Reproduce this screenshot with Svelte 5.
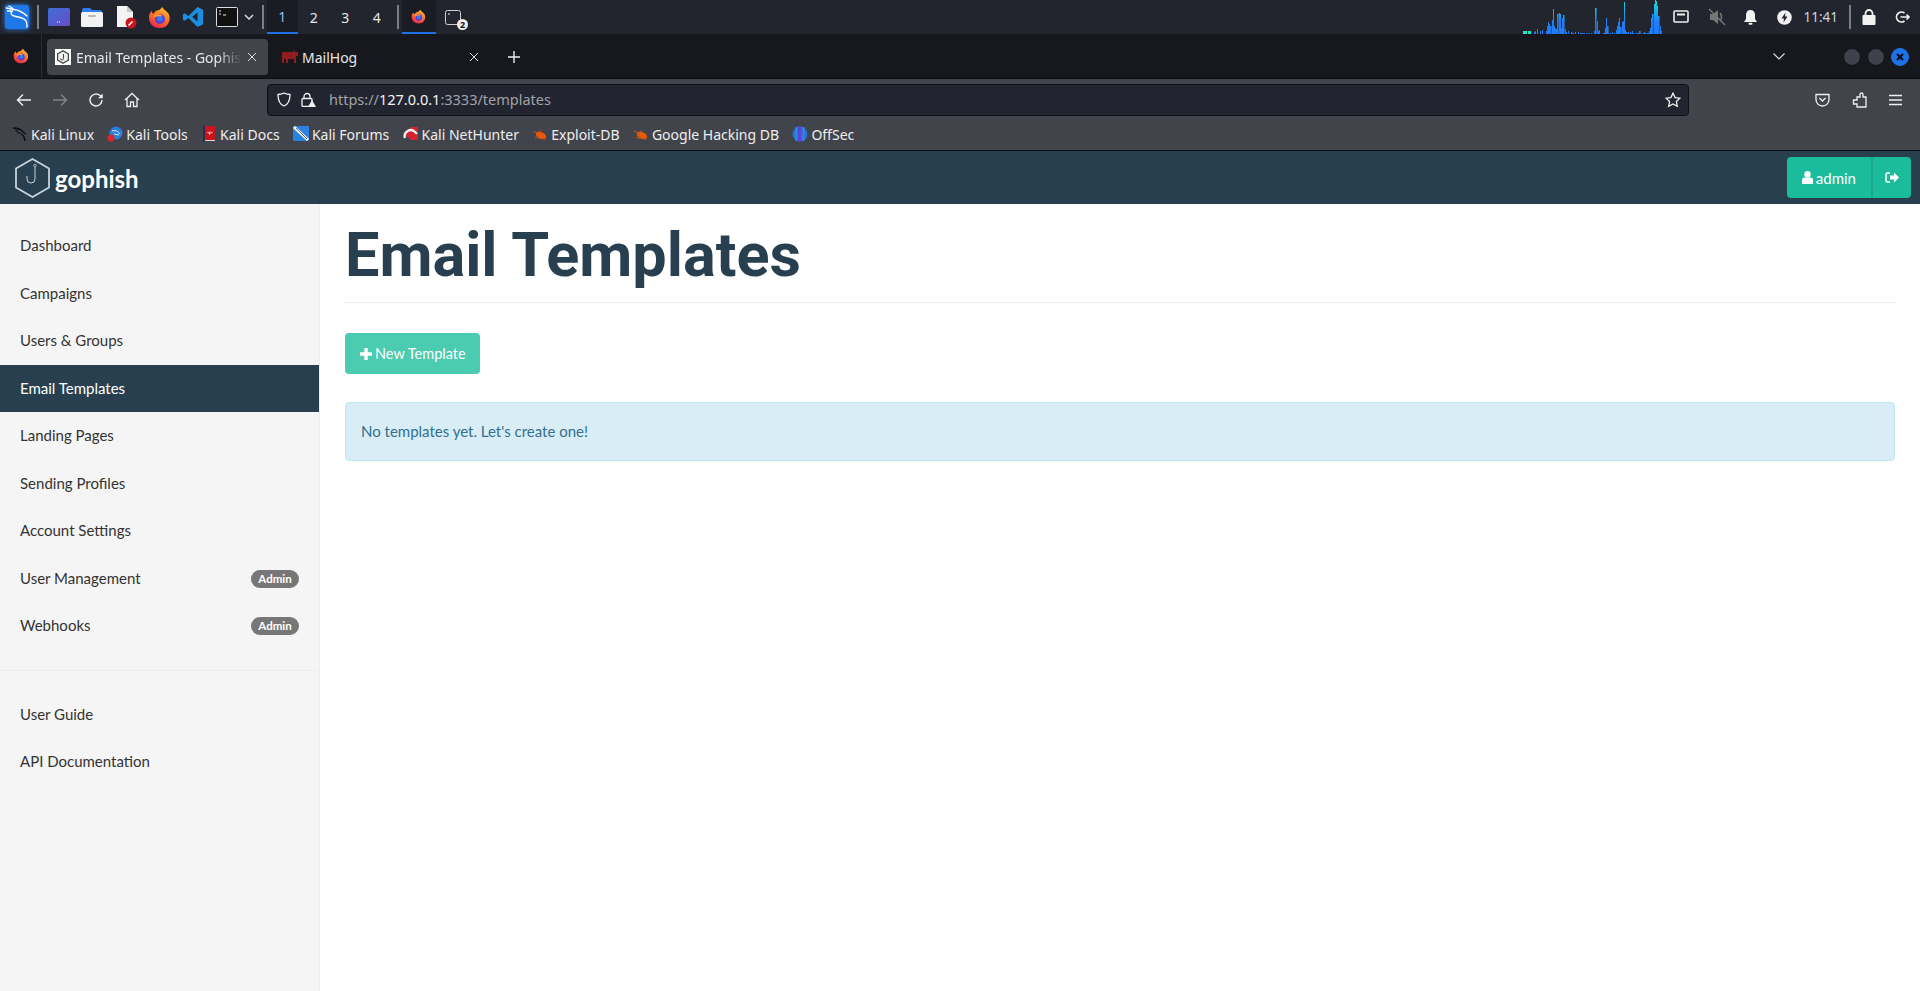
<script>
    const workspaces = ["1", "2", "3", "4"];

    // heights of the cpu graph in the panel, one per bar
    const cpu = [3,3,3,0,3,3,3,0,0,2,3,0,5,0,3,0,4,0,0,3,8,12,10,8,14,25,8,6,5,20,21,20,6,16,19,5,2,0,3,0,2,1,1,0,2,0,2,0,1,1,1,1,0,1,0,1,0,1,0,0,3,26,13,3,4,0,0,1,1,6,16,8,1,1,0,2,0,1,4,8,12,16,7,12,13,32,4,2,2,0,2,1,3,1,0,1,1,1,3,1,0,1,2,1,1,1,3,6,16,20,30,34,33,28,18,8,3];

    const bookmarks = [
        { label: "Kali Linux", icon: "dragon" },
        { label: "Kali Tools", icon: "tools" },
        { label: "Kali Docs", icon: "docs" },
        { label: "Kali Forums", icon: "forums" },
        { label: "Kali NetHunter", icon: "hunter" },
        { label: "Exploit-DB", icon: "bug" },
        { label: "Google Hacking DB", icon: "bug" },
        { label: "OffSec", icon: "offsec" },
    ];

    const navMain = [
        { label: "Dashboard" },
        { label: "Campaigns" },
        { label: "Users & Groups" },
        { label: "Email Templates", active: true },
        { label: "Landing Pages" },
        { label: "Sending Profiles" },
        { label: "Account Settings" },
        { label: "User Management", badge: "Admin" },
        { label: "Webhooks", badge: "Admin" },
    ];
    const navHelp = ["User Guide", "API Documentation"];
</script>

{#snippet firefox(size)}
    <svg width={size} height={size} viewBox="0 0 24 24">
        <defs>
            <linearGradient id="ff" x1="0.7" y1="0" x2="0.2" y2="1">
                <stop offset="0" stop-color="#ffbd2e" />
                <stop offset="0.5" stop-color="#ff6a2b" />
                <stop offset="1" stop-color="#e5204f" />
            </linearGradient>
        </defs>
        <path d="M15 1c1 3 5 4 7 8 2 6-1 14-10 14C5 23 1 18 1 12c0-3 1-5 3-7 0 2 1 3 2 3 1-3 4-3 6-4 1-1 2-2 3-3z" fill="url(#ff)" />
        <circle cx="12.5" cy="13.5" r="5.2" fill="#5b3bd6" />
        <circle cx="12.5" cy="13" r="3" fill="#2f7ff0" />
        <path d="M6 10c3-2 7-2 9 0l-2 1c-2-1-4 0-7 1z" fill="#ff9a2b" />
    </svg>
{/snippet}

{#snippet bug()}
    <svg width="16" height="16" viewBox="0 0 16 16">
        <ellipse cx="9" cy="9.5" rx="5.5" ry="3.2" fill="#e8590c" transform="rotate(25 9 9.5)" />
        <path d="M1 5l6 3M3 12l4-2M8 4l1 3M13 14l-2-3M6 13l1-2" stroke="#c9500f" stroke-width="1" />
    </svg>
{/snippet}

{#snippet closeX()}
    <svg class="tab-close" width="10" height="10" viewBox="0 0 10 10" stroke="#dcdcdc" stroke-width="1"><path d="M1 1l8 8M9 1l-8 8" /></svg>
{/snippet}

<div class="panel">
    <div class="launcher">
        <div class="kali-btn">
            <svg width="24" height="24" viewBox="0 0 24 24" fill="none" stroke="#fff" stroke-width="1.400" stroke-linecap="round" stroke-linejoin="round">
                <path d="M1.500 3L9 4.500C14 5 18 7.500 22 11" />
                <path d="M2.500 6L7.500 6C5 8 6 10 9 11C13 12.500 19 12 21 16C22 18 22 20 22 22" />
                <path d="M4 1L8 3.500" />
            </svg>
        </div>
        <span class="sep first"></span>
        <div class="launch-icon">
            <svg width="22" height="18" viewBox="0 0 22 18"><defs><linearGradient id="desk" x1="0" y1="0" x2="1" y2="1"><stop offset="0" stop-color="#3c6fd8" /><stop offset="1" stop-color="#6a4bc4" /></linearGradient></defs><rect width="22" height="18" rx="1.5" fill="url(#desk)" /><path d="M9 14h4" stroke="#fff" stroke-dasharray="1 1" /></svg>
        </div>
        <div class="launch-icon">
            <svg width="22" height="20" viewBox="0 0 22 20"><path d="M1 3q0-2 2-2h6l2 2h8q2 0 2 2v2H1z" fill="#2b7de9" /><rect x="0" y="5" width="22" height="15" rx="1.5" fill="#f2f2f2" /><rect x="7" y="8" width="8" height="2" rx="1" fill="#b9b9b9" /></svg>
        </div>
        <div class="launch-icon">
            <svg width="22" height="24" viewBox="0 0 22 24"><path d="M2 1h10l6 6v15H2z" fill="#f4f4f4" /><path d="M12 1l6 6h-6z" fill="#c9c9c9" /><circle cx="16" cy="18" r="5.5" fill="#c4161c" /><path d="M13.5 20.5l4-4" stroke="#fff" stroke-width="1.6" /></svg>
        </div>
        <div class="launch-icon">{@render firefox(23)}</div>
        <div class="launch-icon">
            <svg width="22" height="22" viewBox="0 0 24 24"><path d="M17 1l6 3v16l-6 3-10-10 -4 3-2-1V9l2-1 4 3zM17 7l-6 5 6 5z" fill="#1b8fe0" fill-rule="evenodd" /></svg>
        </div>
        <div class="launch-icon">
            <svg width="22" height="20" viewBox="0 0 22 20"><rect x="0.5" y="0.5" width="21" height="19" rx="1" fill="#111" stroke="#ddd" /><path d="M3 4h2M3 7h2M7 8h3" stroke="#eee" /></svg>
        </div>
        <svg class="chev" width="10" height="6" viewBox="0 0 10 6" fill="none" stroke="#d8d8d8" stroke-width="1.5"><path d="M1 1l4 4 4-4" /></svg>
        <span class="sep"></span>
    </div>
    <div class="workspaces">
        {#each workspaces as ws, i}
            <span class="ws" class:current={i === 0}>{ws}</span>
        {/each}
    </div>
    <span class="sep"></span>
    <div class="tasks">
        <span class="task current">{@render firefox(15)}</span>
        <span class="task">
            <svg width="16" height="15" viewBox="0 0 16 15"><rect x="0.5" y="0.5" width="15" height="14" rx="2" fill="#23262e" stroke="#cfcfcf" /><path d="M3 4h2" stroke="#eee" /></svg>
            <span class="task-count">2</span>
        </span>
    </div>
    <div class="panel-right">
        <div class="cpu">
            {#each cpu as h, i}
                <span class="cpu-bar" class:idle={i < 8} style="height: {h}px"></span>
            {/each}
        </div>
        <svg class="tray net" width="16" height="14" viewBox="0 0 16 14" fill="none" stroke="#eee" stroke-width="1.6"><rect x="1" y="1" width="14" height="11" rx="1" /><path d="M4 3.5h8v2H4z" fill="#eee" stroke="none" /></svg>
        <svg class="tray mute" width="18" height="18" viewBox="0 0 18 18" fill="#777"><path d="M2 6h3l5-4v14l-5-4H2z" /><path d="M12 5q3 4 0 8" stroke="#777" fill="none" stroke-width="1.5" /><path d="M1 1l16 16" stroke="#777" stroke-width="1.5" /></svg>
        <svg class="tray bell" width="15" height="16" viewBox="0 0 15 16" fill="#f2f2f2"><path d="M7.500 1c3 0 4.500 2 4.500 5v4l2 3H1l2-3V6c0-3 1.500-5 4.500-5z" /><rect x="5.500" y="13.800" width="4" height="2" rx="1" /></svg>
        <svg class="tray power" width="15" height="15" viewBox="0 0 15 15"><circle cx="7.500" cy="7.500" r="7.300" fill="#f2f2f2" /><path d="M8.500 2.500L4.500 8.500h2.500l-.5 4 4-6H8z" fill="#23262e" /></svg>
        <span class="clock">11:41</span>
        <span class="sep tall"></span>
        <svg class="tray lock" width="14" height="16" viewBox="0 0 14 16"><rect x="0.500" y="6" width="13" height="10" rx="1" fill="#f2f2f2" /><path d="M3.500 7V4.500a3.500 3.500 0 017 0V7" fill="none" stroke="#f2f2f2" stroke-width="1.800" /></svg>
        <svg class="tray last" width="16" height="14" viewBox="0 0 16 14" fill="none" stroke="#eee" stroke-width="1.700"><path d="M10.500 3a5 5 0 100 8M6.500 7h9M12.500 4.500L15 7l-2.500 2.500" /></svg>
    </div>
</div>

<div class="tabbar">
    <div class="ff-menu">{@render firefox(16)}</div>
    <div class="tab selected">
        <svg width="16" height="16" viewBox="0 0 16 16"><rect width="16" height="16" fill="#fff" /><path d="M8 1l6 3.500v7L8 15l-6-3.500v-7z" fill="#444" /><path d="M8 2.500l4.800 2.800v5.400L8 13.500l-4.800-2.800V5.300z" fill="#eee" /><path d="M8.500 5v4.500a1.500 1.500 0 01-3 0" fill="none" stroke="#444" /></svg>
        <span class="tab-title fade">Email Templates - Gophish</span>
        {@render closeX()}
    </div>
    <div class="tab other">
        <svg width="16" height="14" viewBox="0 0 16 14" fill="#8f1d1f"><path d="M0 2h11l1-2 1 2h3v4h-2v7h-2V9H6v4H4V9H2v4H0z" /></svg>
        <span class="tab-title">MailHog</span>
        {@render closeX()}
    </div>
    <svg class="new-tab" width="12" height="12" viewBox="0 0 12 12" stroke="#eee" stroke-width="1.400"><path d="M6 0v12M0 6h12" /></svg>
    <div class="tab-right">
        <svg width="12" height="7" viewBox="0 0 12 7" fill="none" stroke="#dcdcdc" stroke-width="1.200"><path d="M0.500 0.500L6 6l5.500-5.500" /></svg>
        <div class="win-btns">
            <span class="win"></span>
            <span class="win"></span>
            <span class="win close">
                <svg width="8" height="8" viewBox="0 0 8 8" stroke="#0b0d12" stroke-width="2"><path d="M1 1l6 6M7 1l-6 6" /></svg>
            </span>
        </div>
    </div>
</div>

<div class="toolbar">
    <div class="nav-btns">
        <svg width="16" height="14" viewBox="0 0 16 14" fill="none" stroke="#f0f0f0" stroke-width="1.400"><path d="M15 7H2M7 1.500L1.500 7 7 12.500" /></svg>
        <svg width="16" height="14" viewBox="0 0 16 14" fill="none" stroke="#83858b" stroke-width="1.400"><path d="M1 7h13M9 1.500L14.500 7 9 12.500" /></svg>
        <svg width="16" height="16" viewBox="0 0 16 16" fill="none" stroke="#f0f0f0" stroke-width="1.400"><path d="M14 8a6 6 0 11-2-4.500L14.300 5.500" /><path d="M14.700 1.500v4.700H10" fill="#f0f0f0" stroke="none" /></svg>
        <svg width="16" height="16" viewBox="0 0 16 16" fill="none" stroke="#f0f0f0" stroke-width="1.300"><path d="M1 8l7-6.500L15 8M3 6.500V14.500h3.500V10h3v4.500H13V6.500" /></svg>
    </div>
    <div class="urlbar">
        <svg width="14" height="15" viewBox="0 0 14 15" fill="none" stroke="#f0f0f0" stroke-width="1.300"><path d="M7 1c2 1 4 1.500 6 1.500 0 6-2 10-6 11.500C3 12.500 1 8.500 1 2.500 3 2.500 5 2 7 1z" /></svg>
        <svg width="15" height="15" viewBox="0 0 15 15"><path d="M3 7V4.500a3 3 0 016 0V7" fill="none" stroke="#f0f0f0" stroke-width="1.300" /><rect x="1" y="6.500" width="10" height="8" rx="1" fill="none" stroke="#f0f0f0" stroke-width="1.300" /><path d="M11 8l4 7H7z" fill="#f0f0f0" /></svg>
        <span class="url"><span class="dim">https://</span>127.0.0.1<span class="dim">:3333/templates</span></span>
        <svg class="star" width="16" height="16" viewBox="0 0 16 16" fill="none" stroke="#f0f0f0" stroke-width="1.300"><path d="M8 1.200l2.100 4.400 4.800.6-3.500 3.300.9 4.800L8 12l-4.300 2.300.9-4.800L1.100 6.200l4.800-.6z" /></svg>
    </div>
    <div class="tool-right">
        <svg width="15" height="14" viewBox="0 0 15 14" fill="none" stroke="#f0f0f0" stroke-width="1.300"><path d="M1 1.500h13v5a6.500 6.500 0 01-13 0z" /><path d="M4.500 5l3 3 3-3" /></svg>
        <svg width="15" height="16" viewBox="0 0 15 16" fill="none" stroke="#f0f0f0" stroke-width="1.300"><path d="M14 15H5v-3H1.500V8H5V5h3V2.500a1.500 1.500 0 013 0V5h3z" /></svg>
        <svg width="13" height="12" viewBox="0 0 13 12" stroke="#f0f0f0" stroke-width="1.400"><path d="M0 1.500h13M0 6h13M0 10.500h13" /></svg>
    </div>
</div>

<div class="bookmarks">
    {#each bookmarks as b}
        <span class="bookmark">
            {#if b.icon === "dragon"}
                <svg width="16" height="16" viewBox="0 0 16 16" fill="none" stroke="#0c0c0c" stroke-width="1.300"><path d="M1 2c4 0 8 1 10 4l3 2M5 6c3 1 6 2 7 5l1 4M3 4l3 1" /></svg>
            {:else if b.icon === "tools"}
                <svg width="16" height="16" viewBox="0 0 16 16"><circle cx="9" cy="7" r="6.500" fill="#2d7ddb" /><path d="M5 5c3-1 6 0 8 3M7 8l5 1" stroke="#dfefff" fill="none" /><circle cx="4" cy="12" r="3.500" fill="#d9262a" /></svg>
            {:else if b.icon === "docs"}
                <svg width="16" height="16" viewBox="0 0 16 16"><rect x="2" y="0" width="12" height="14" fill="#c8141b" /><rect x="2" y="0" width="2" height="16" fill="#2a2a55" /><path d="M4 14.500h10" stroke="#ddd" /><path d="M6.500 6L8 7.500M11.500 6L10 7.500M9 5.500L8.500 8.500" stroke="#fff" /></svg>
            {:else if b.icon === "forums"}
                <svg width="16" height="16" viewBox="0 0 16 16"><rect width="16" height="15" rx="1" fill="#2a82e4" /><path d="M1 1l14 13" stroke="#fff" stroke-width="3" /><path d="M3 2l11 11" stroke="#333" stroke-width="0.800" /></svg>
            {:else if b.icon === "hunter"}
                <svg width="16" height="16" viewBox="0 0 16 16"><path d="M1 8l7-7h7v13H8z" fill="#d3232f" /><path d="M2 12a6 6 0 0110-6l2 2" fill="none" stroke="#eee" stroke-width="2.400" /></svg>
            {:else if b.icon === "bug"}
                {@render bug()}
            {:else}
                <svg width="16" height="16" viewBox="0 0 15 15"><circle cx="7.500" cy="7.500" r="7" fill="#2f6fe0" /><path d="M7 0v15" stroke="#6e3bd0" stroke-width="2.500" /><path d="M4 1v13M11 1v13" stroke="#1aa5d8" /></svg>
            {/if}
            {b.label}
        </span>
    {/each}
</div>

<div class="gp-nav">
    <div class="brand">
        <svg width="37" height="40" viewBox="0 0 37 40" fill="none" stroke="#c7d2da" stroke-width="1.800">
            <path d="M18.500 1l16.500 9.500v19L18.500 39 2 29.500v-19z" />
            <path d="M21 9v12a4 4 0 01-8 0v-3" stroke-width="1" />
            <circle cx="21" cy="7.500" r="1.300" stroke-width="0.800" />
        </svg>
        <span class="brand-name">gophish</span>
    </div>
    <div class="user-group">
        <span class="user-btn">
            <svg width="11" height="13" viewBox="0 0 11 13" fill="#fff"><circle cx="5.500" cy="3.200" r="3.200" /><path d="M0 13V9q0-2.500 2.500-2.500h6Q11 6.500 11 9v4z" /></svg>
            admin
        </span>
        <span class="logout-btn">
            <svg width="14" height="11" viewBox="0 0 14 11"><path d="M5 1H2.500Q1 1 1 2.500v6Q1 10 2.500 10H5" fill="none" stroke="#fff" stroke-width="1.500" /><path d="M5 3.500h4V0.500l5 5-5 5v-3H5z" fill="#fff" /></svg>
        </span>
    </div>
</div>

<div class="page">
    <aside class="sidebar">
        <ul class="nav">
            {#each navMain as item}
                <li class="nav-item" class:active={item.active}>
                    {item.label}
                    {#if item.badge}<span class="badge">{item.badge}</span>{/if}
                </li>
            {/each}
        </ul>
        <ul class="nav help">
            {#each navHelp as label}
                <li class="nav-item">{label}</li>
            {/each}
        </ul>
    </aside>
    <main class="content">
        <h1>Email Templates</h1>
        <button class="new-btn">
            <svg width="12" height="12" viewBox="0 0 12 12" fill="#fff"><path d="M4.300 0h3.400v4.300H12v3.400H7.700V12H4.300V7.700H0V4.300h4.300z" /></svg>
            New Template
        </button>
        <div class="alert">No templates yet. Let's create one!</div>
    </main>
</div>

<style>
    :global(body) {
        margin: 0;
        background: #fff;
        font-family: "Lato", "Noto Sans", sans-serif;
        overflow: hidden;
    }

    /* xfce panel */
    .panel {
        height: 34px;
        background: #22252d;
        display: flex;
        align-items: center;
    }
    .launcher {
        display: flex;
        align-items: center;
        height: 100%;
        padding-left: 5px;
    }
    .kali-btn {
        width: 24px;
        height: 24px;
        background: #1f78e8;
        border-radius: 3px;
        box-shadow: 0 0 5px #2b84f0;
        display: flex;
    }
    .sep {
        width: 2px;
        height: 24px;
        background: #7c7e83;
        margin: 0 3px;
        flex: none;
    }
    .sep.first {
        margin: 0 3px 0 8px;
    }
    .launch-icon {
        width: 33.600px;
        display: flex;
        justify-content: center;
    }
    .chev {
        margin-right: 5px;
    }
    .workspaces {
        display: flex;
        height: 100%;
        margin-right: 1.400px;
    }
    .ws {
        width: 31.500px;
        display: flex;
        align-items: center;
        justify-content: center;
        color: #e6e6e6;
        font-size: 14px;
        font-family: "Noto Sans", sans-serif;
        box-sizing: border-box;
    }
    .ws.current {
        background: #1a1c23;
        border-bottom: 2px solid #1f72e6;
        color: #8fc0f0;
    }
    .tasks {
        display: flex;
        height: 100%;
    }
    .task {
        width: 34px;
        display: flex;
        align-items: center;
        justify-content: center;
        box-sizing: border-box;
        position: relative;
    }
    .task.current {
        background: #1a1c23;
        border-bottom: 2px solid #1f72e6;
    }
    .task-count {
        position: absolute;
        right: 2px;
        bottom: 4px;
        width: 11px;
        height: 11px;
        background: #eee;
        border-radius: 50%;
        color: #111;
        font: bold 9px/11px "Noto Sans", sans-serif;
        text-align: center;
    }
    .panel-right {
        margin-left: auto;
        display: flex;
        align-items: center;
        height: 100%;
        padding-right: 10px;
    }
    .cpu {
        display: flex;
        align-items: flex-end;
        height: 34px;
    }
    .cpu-bar {
        width: 1.200px;
        flex: none;
        background: linear-gradient(to top, #1f7cf5, #1f7cf5 35%, #12e0e0) bottom / 100% 34px no-repeat;
    }
    .cpu-bar.idle {
        background: #1ee8c8;
    }
    .tray {
        flex: none;
    }
    .net {
        margin-left: 11px;
    }
    .mute {
        margin-left: 19px;
    }
    .bell {
        margin-left: 17.500px;
    }
    .power {
        margin-left: 19px;
    }
    .clock {
        margin-left: 11px;
        margin-right: 10.500px;
        color: #cfd6de;
        font: 13.500px "Noto Sans", sans-serif;
    }
    .sep.tall {
        margin: 0;
    }
    .lock {
        margin-left: 11.500px;
    }
    .last {
        margin-left: 18px;
    }

    /* firefox chrome */
    .tabbar {
        height: 45px;
        background: #16181d;
        display: flex;
        align-items: center;
        box-sizing: border-box;
        border-bottom: 1px solid #0c0d10;
    }
    .ff-menu {
        width: 42px;
        height: 100%;
        flex: none;
        display: flex;
        align-items: center;
        justify-content: center;
        border-right: 1px solid #2b2d33;
        box-sizing: border-box;
    }
    .tab {
        width: 221px;
        height: 36px;
        box-sizing: border-box;
        padding: 0 11px 0 8px;
        margin: 2px 0 0 5px;
        display: flex;
        align-items: center;
        gap: 5px;
        border-radius: 4px;
        color: #e8e8e8;
        font: 14px "Noto Sans", sans-serif;
        flex: none;
    }
    .tab.selected {
        background: #42444c;
    }
    .tab.other {
        margin-left: 3px;
        width: 220px;
        padding-left: 11px;
        padding-right: 12px;
        gap: 4px;
    }
    .tab-title {
        flex: 1;
        white-space: nowrap;
        overflow: hidden;
    }
    .tab-title.fade {
        mask-image: linear-gradient(to right, #000 85%, transparent);
    }
    .tab-close {
        flex: none;
    }
    .new-tab {
        margin: 2px 0 0 17px;
    }
    .tab-right {
        margin-left: auto;
        display: flex;
        align-items: center;
    }
    .win-btns {
        display: flex;
        gap: 6px;
        margin: 2px 11px 0 58px;
    }
    .win {
        width: 18px;
        height: 18px;
        border-radius: 50%;
        background: #3c414c;
        border: 1px solid #0f1014;
        box-sizing: border-box;
        display: flex;
        align-items: center;
        justify-content: center;
    }
    .win.close {
        background: #1f72e6;
        border-color: #1f72e6;
    }
    .toolbar {
        height: 41px;
        background: #42444c;
        display: flex;
        align-items: center;
        box-sizing: border-box;
    }
    .nav-btns {
        width: 267px;
        padding-left: 16px;
        box-sizing: border-box;
        display: flex;
        align-items: center;
        gap: 20px;
        flex: none;
    }
    .urlbar {
        width: 1422px;
        height: 32px;
        box-sizing: border-box;
        background: #22252f;
        border: 1px solid #0f1014;
        border-radius: 4px;
        display: flex;
        align-items: center;
        gap: 10px;
        padding: 0 7px 0 9px;
    }
    .url {
        color: #f4f4f4;
        font: 14.500px "Noto Sans", sans-serif;
        margin: -2px 0 0 3px;
    }
    .url .dim {
        color: #a0a2a8;
    }
    .star {
        margin-left: auto;
    }
    .tool-right {
        margin-left: auto;
        display: flex;
        align-items: center;
        gap: 22px;
        padding-right: 18px;
    }
    .bookmarks {
        height: 30px;
        background: #42444c;
        display: flex;
        align-items: center;
        padding-left: 12px;
        gap: 13.300px;
        color: #eee;
        font: 14px "Noto Sans", sans-serif;
        box-sizing: border-box;
        padding-bottom: 2px;
    }
    .bookmark {
        display: flex;
        align-items: center;
        gap: 3px;
        white-space: nowrap;
    }

    /* gophish */
    .gp-nav {
        height: 54px;
        background: #283f50;
        border-top: 1px solid #0c0d10;
        box-sizing: border-box;
        display: flex;
        align-items: center;
        justify-content: space-between;
        padding: 0 9px 0 14px;
    }
    .brand {
        display: flex;
        align-items: center;
        gap: 4px;
    }
    .brand-name {
        color: #fff;
        font: 700 24px "Lato", sans-serif;
        margin-top: 2px;
    }
    .user-group {
        display: flex;
        height: 41px;
        border-radius: 4px;
        overflow: hidden;
        background: #1abc9c;
        color: #fff;
        font-size: 15px;
    }
    .user-btn {
        display: flex;
        align-items: center;
        gap: 3px;
        padding: 0 15px;
        border-right: 2px solid #18aa8e;
    }
    .logout-btn {
        display: flex;
        align-items: center;
        padding: 0 12px;
    }
    .page {
        display: flex;
        height: 787px;
    }
    .sidebar {
        width: 319px;
        flex: none;
        background: #f5f5f5;
        border-right: 1px solid #eee;
        padding-top: 18px;
    }
    .nav {
        list-style: none;
        margin: 0;
        padding: 0 0 20px;
        border-bottom: 1px solid #eee;
    }
    .nav.help {
        border-bottom: 0;
        padding-top: 20px;
    }
    .nav-item {
        height: 47.500px;
        box-sizing: border-box;
        display: flex;
        align-items: center;
        justify-content: space-between;
        padding: 0 20px 1px;
        color: #333;
        font-size: 15px;
    }
    .nav-item.active {
        background: #283f50;
        color: #fff;
    }
    .badge {
        width: 48px;
        height: 18px;
        margin-top: 2px;
        border-radius: 9px;
        background: #777;
        color: #fff;
        font-size: 11.500px;
        font-weight: 700;
        line-height: 18px;
        text-align: center;
    }
    .content {
        flex: 1;
        padding: 0 25px;
        min-width: 0;
    }
    h1 {
        margin: 0 0 30px;
        height: 99px;
        box-sizing: border-box;
        border-bottom: 1px solid #eee;
        padding-top: 9px;
        color: #283f50;
        font: 700 61.200px/84px "Roboto", sans-serif;
    }
    .new-btn {
        display: flex;
        align-items: center;
        gap: 3px;
        width: 135px;
        height: 41px;
        padding: 0 0 0 15px;
        border: 0;
        border-radius: 4px;
        background: #4bcbb0;
        color: #fff;
        font: 14.500px "Lato", sans-serif;
    }
    .alert {
        margin-top: 28px;
        height: 59px;
        box-sizing: border-box;
        padding: 0 15px 2px;
        display: flex;
        align-items: center;
        background: #d9edf7;
        border: 1px solid #bce8f1;
        border-radius: 4px;
        color: #31708f;
        font-size: 15px;
    }
</style>
